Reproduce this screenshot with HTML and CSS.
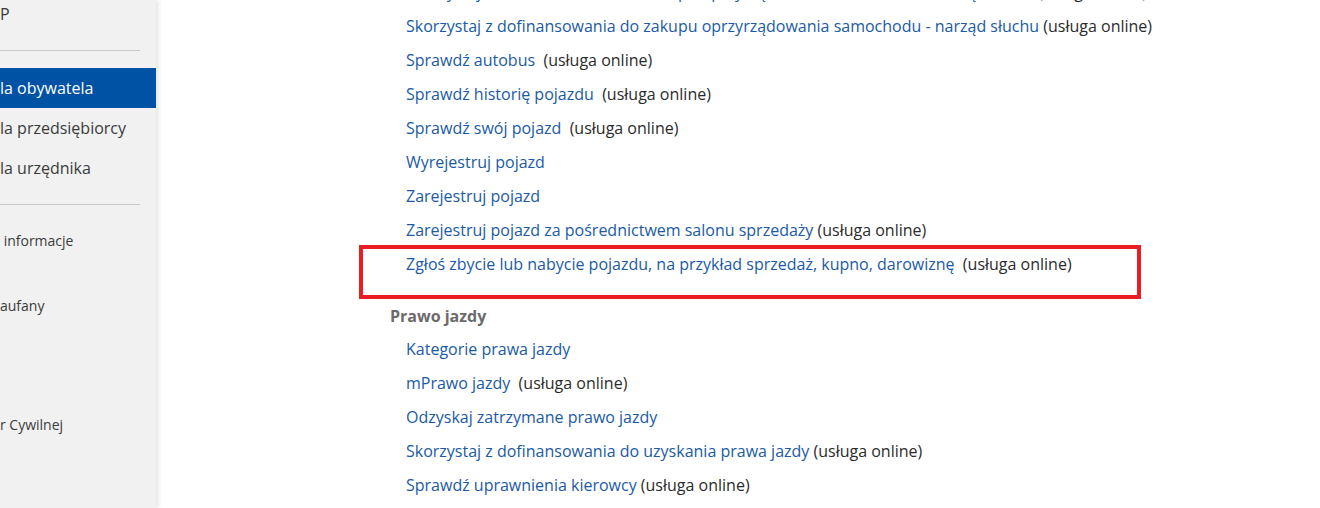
FILE: index.html
```html
<!DOCTYPE html>
<html lang="pl">

<head>
    <meta charset="UTF-8">
    <meta name="viewport" content="width=device-width, initial-scale=1.0">
    <title>Pojazdy - usługi</title>
    <link rel="stylesheet" href="styles.css">
</head>

<body>

    <nav class="menu">
        <p class="menu-top">P</p>
        <div class="sep"></div>
        <a class="menu-item active" href="#">la obywatela</a>
        <a class="menu-item" href="#">la przedsiębiorcy</a>
        <a class="menu-item" href="#">la urzędnika</a>
        <div class="sep sep2"></div>
        <a class="menu-small m1" href="#">&nbsp;informacje</a>
        <a class="menu-small m2" href="#">aufany</a>
        <a class="menu-small m3" href="#">r Cywilnej</a>
    </nav>

    <main class="tresc">
        <ul class="lista pierwsza">
            <li><a href="#">Skorzystaj z dofinansowania do zakupu oprzyrządowania samochodu - narząd ruchu</a> (usługa online)</li>
            <li><a href="#">Skorzystaj z dofinansowania do zakupu oprzyrządowania samochodu - narząd słuchu</a> (usługa online)</li>
            <li><a href="#">Sprawdź autobus</a> &nbsp;(usługa online)</li>
            <li><a href="#">Sprawdź historię pojazdu</a> &nbsp;(usługa online)</li>
            <li><a href="#">Sprawdź swój pojazd</a> &nbsp;(usługa online)</li>
            <li><a href="#">Wyrejestruj pojazd</a></li>
            <li><a href="#">Zarejestruj pojazd</a></li>
            <li><a href="#">Zarejestruj pojazd za pośrednictwem salonu sprzedaży</a> (usługa online)</li>
            <li class="zaznaczone"><a href="#">Zgłoś zbycie lub nabycie pojazdu, na przykład sprzedaż, kupno, darowiznę</a> &nbsp;(usługa online)</li>
        </ul>

        <h2>Prawo jazdy</h2>
        <ul class="lista">
            <li><a href="#">Kategorie prawa jazdy</a></li>
            <li><a href="#">mPrawo jazdy</a> &nbsp;(usługa online)</li>
            <li><a href="#">Odzyskaj zatrzymane prawo jazdy</a></li>
            <li><a href="#">Skorzystaj z dofinansowania do uzyskania prawa jazdy</a> (usługa online)</li>
            <li><a href="#">Sprawdź uprawnienia kierowcy</a> (usługa online)</li>
        </ul>
    </main>

</body>

</html>
```

FILE: styles.css
```css
body {
    margin: 0;
    height: 508px;
    overflow: hidden;
    display: flex;
    background: white;
    font-family: "Open Sans", Arial, sans-serif;
    color: #333;
}

a {
    text-decoration: none;
}

.menu {
    width: 156px;
    flex-shrink: 0;
    background: #f1f1f1;
    box-shadow: 2px 0 5px rgba(0, 0, 0, 0.12);
    display: flex;
    flex-direction: column;
    position: relative;
    z-index: 1;
}

.menu-top {
    margin: 0;
    line-height: 28px;
    font-size: 16px;
    color: #3b3b3b;
}

.sep {
    margin-top: 22px;
    width: 140px;
    height: 1px;
    background: #c8c8c8;
}

.sep2 {
    margin-top: 16px;
}

.menu-item {
    display: block;
    height: 40px;
    line-height: 40px;
    font-size: 16px;
    color: #3b3b3b;
}

.menu-item.active {
    margin-top: 17px;
    background: #0052a5;
    color: white;
}

.menu-small {
    display: block;
    line-height: 30px;
    font-size: 14px;
    color: #3b3b3b;
}

.m1 {
    margin-top: 21px;
}

.m2 {
    margin-top: 35px;
}

.m3 {
    margin-top: 89px;
}

.tresc {
    flex: 1;
    padding-left: 234px;
    font-size: 16px;
}

.lista {
    list-style: none;
    margin: 0;
    padding: 0 0 0 16px;
}

.pierwsza {
    margin-top: -25px;
}

.lista li {
    height: 34px;
    line-height: 34px;
    white-space: nowrap;
    color: #2b2b2b;
}

.lista a {
    color: #1a5aa6;
}

.zaznaczone {
    position: relative;
}

/* czerwona ramka z adnotacji */
.zaznaczone::after {
    content: "";
    position: absolute;
    left: -47px;
    top: -2px;
    width: 774px;
    height: 46px;
    border: 4.5px solid #ec1c24;
}

h2 {
    margin: 19px 0 0;
    height: 32px;
    line-height: 32px;
    font-size: 16px;
    font-weight: 700;
    color: #6b6b6b;
}
```
